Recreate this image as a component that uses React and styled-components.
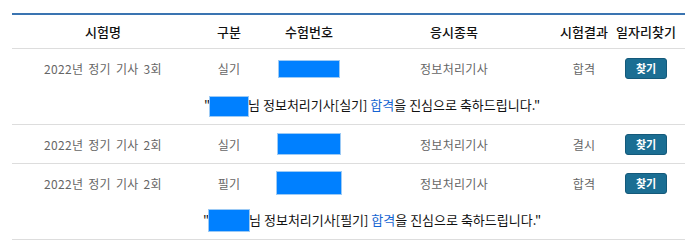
import React from "react";
import styled, { createGlobalStyle } from "styled-components";

const Global = createGlobalStyle`
  html, body { margin: 0; padding: 0; background: #fff; overflow: hidden; }
  body { font-family: "Noto Sans CJK KR", "Noto Sans", sans-serif; }
`;

const Wrap = styled.div`
  padding: 13px 0 0 12px;
  width: 760px;
`;

const Table = styled.table`
  width: 720px;
  table-layout: fixed;
  border-collapse: collapse;
  border-top: 2px solid #3a74b1;
`;

const Th = styled.th`
  height: 33px;
  padding: 0;
  font-size: 13px;
  font-weight: 500;
  text-align: center;
  white-space: nowrap;
  border-bottom: 1px solid #ddd;
  color: ${(p) => (p.$accent ? "#f0a030" : "#111")};
`;

const Tr = styled.tr`
  border-bottom: ${(p) => (p.$open ? "none" : "1px solid #ddd")};
`;

const Td = styled.td`
  height: 38px;
  padding: 0;
  font-size: 12px;
  letter-spacing: 0.3px;
  word-spacing: 2px;
  color: #666;
  text-align: center;
  white-space: nowrap;
`;

const Msg = styled.td`
  height: 37px;
  padding: 0;
  font-size: 13px;
  color: #111;
  text-align: center;
  white-space: nowrap;
  border-bottom: 1px solid #ddd;
`;

const Hidden = styled.span`
  display: inline-block;
  vertical-align: middle;
  width: ${(p) => p.$w}px;
  height: ${(p) => p.$h}px;
  background: #0080ff;
  box-shadow: 0 0 0 1px #9ccaf5;
`;

const Pass = styled.span`
  color: #1464d2;
`;

const FindButton = styled.button`
  width: 42px;
  height: 21px;
  padding: 0;
  border: 1px solid #14597a;
  border-radius: 3px;
  background: #1b6e93;
  color: #fff;
  font-family: inherit;
  font-size: 11px;
  font-weight: 700;
  letter-spacing: 0;
  word-spacing: 0;
  cursor: pointer;
`;

const rows = [
  { name: "2022년 정기 기사 3회", kind: "실기", box: [60, 16], result: "합격", msg: true, msgBox: [38, 19] },
  { name: "2022년 정기 기사 2회", kind: "실기", box: [62, 20], result: "결시", msg: false },
  { name: "2022년 정기 기사 2회", kind: "필기", box: [64, 22], result: "합격", msg: true, msgBox: [40, 21] },
];

export default function App() {
  return (
    <>
      <Global />
      <Wrap>
        <Table>
          <colgroup>
            <col style={{ width: 182 }} />
            <col style={{ width: 70 }} />
            <col style={{ width: 90 }} />
            <col style={{ width: 200 }} />
            <col style={{ width: 60 }} />
            <col style={{ width: 64 }} />
            <col style={{ width: 54 }} />
          </colgroup>
          <thead>
            <tr>
              <Th>시험명</Th>
              <Th>구분</Th>
              <Th>수험번호</Th>
              <Th>응시종목</Th>
              <Th>시험결과</Th>
              <Th>일자리찾기</Th>
              <Th $accent>±</Th>
            </tr>
          </thead>
          <tbody>
            {rows.map((r, i) => (
              <React.Fragment key={i}>
                <Tr $open={r.msg}>
                  <Td>{r.name}</Td>
                  <Td>{r.kind}</Td>
                  <Td>
                    <Hidden $w={r.box[0]} $h={r.box[1]} />
                  </Td>
                  <Td>정보처리기사</Td>
                  <Td>{r.result}</Td>
                  <Td>
                    <FindButton>찾기</FindButton>
                  </Td>
                  <Td />
                </Tr>
                {r.msg && (
                  <tr>
                    <Msg colSpan={7}>
                      "<Hidden $w={r.msgBox[0]} $h={r.msgBox[1]} />님 정보처리기사[{r.kind}] <Pass>합격</Pass>을 진심으로 축하드립니다."
                    </Msg>
                  </tr>
                )}
              </React.Fragment>
            ))}
          </tbody>
        </Table>
      </Wrap>
    </>
  );
}
